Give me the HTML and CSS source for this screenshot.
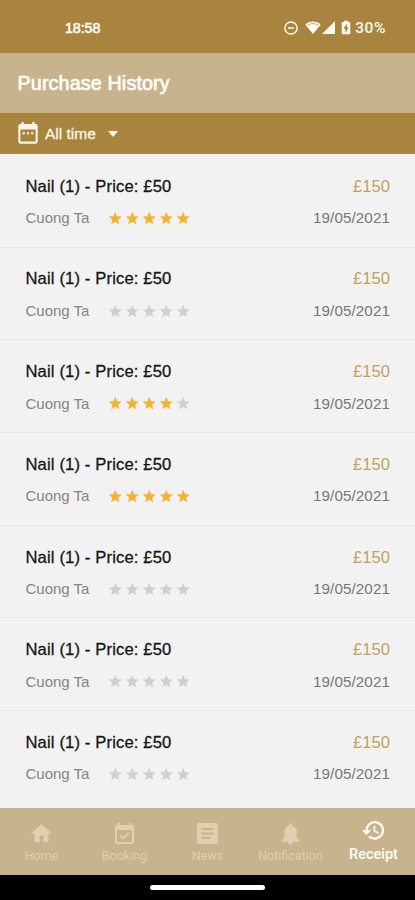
FILE: index.html
```
<!DOCTYPE html>
<html lang="en">
<head>
<meta charset="utf-8">
<title>Purchase History</title>
<link rel="stylesheet" href="styles.css">
</head>
<body>
<svg class="defs" aria-hidden="true">
  <symbol id="star" viewBox="0 0 24 24"><path d="M12 17.8 18.7 22l-1.8-7.7 5.9-5.1-7.8-.7L12 1.4 9 8.500l-7.800.7 5.900 5.100L5.300 22z"/></symbol>
</svg>
<div class="phone">
  <div class="status">
    <span class="clock">18:58</span>
    <span class="status-icons">
      <svg class="dnd" viewBox="0 0 14 14"><circle cx="7" cy="7" r="6.100"/><path d="M4 7h6"/></svg>
      <svg class="wifi" viewBox="0 0 16 13"><path d="M8 13 .3 3.700C4.500-.6 11.500-.6 15.700 3.700z"/><path class="wifi-gap" d="M2.800 4.300C6 2 10 2 13.200 4.300"/></svg>
      <svg class="signal" viewBox="0 0 13 13"><path d="M13 0v13H0z"/></svg>
      <svg class="battery" viewBox="0 0 10 15"><path d="M3 2V.8h4V2h1.300q1 0 1 1v10.300q0 1-1 1H1.700q-1 0-1-1V3q0-1 1-1z"/><path class="bolt" d="M5.800 3.500 2.400 8.800h2v4.200l3.300-5.500H5.800z"/></svg>
      <span class="percent">30%</span>
    </span>
  </div>
  <header class="header"><h1>Purchase History</h1></header>
  <div class="filter">
    <svg class="calendar" viewBox="0 0 20 22"><path fill-rule="evenodd" d="M3.500 0h2.200v2h8.600V0h2.200v2h1q2.200 0 2.200 2.200v15.300q0 2.200-2.200 2.200H2.500q-2.200 0-2.200-2.200V4.200Q.3 2 2.500 2h1zM2.400 7.400v12.200h15.200V7.400z"/><path d="M4.500 10.300h2.300v2H4.500zm4.300 0h2.300v2H8.800zm4.300 0h2.300v2h-2.300z"/></svg>
    <span class="filter-text">All time</span>
    <svg class="caret" viewBox="0 0 10 6"><path d="M0 0h10L5 6z"/></svg>
  </div>
  <main class="list" id="list"></main>
  <nav class="tabs">
    <div class="tab"><svg viewBox="0 0 24 24"><path d="M10 21v-7h4v7h5.200v-8.700H23L12 2 1 12.300h3.800V21z"/></svg><span>Home</span></div>
    <div class="tab"><svg viewBox="0 0 24 24"><path fill-rule="evenodd" d="M5 1h2.300v2h9.400V1H19v2h.5Q22 3 22 5.300v15.200q0 2.500-2.500 2.500h-15Q2 23 2 20.500V5.300Q2 3 4.500 3H5zM4.200 8.300v12.500h15.600V8.300z"/><path d="m10.700 18.600-3.700-3.700 1.300-1.300 2.400 2.400 5.200-5.200 1.300 1.300z"/></svg><span>Booking</span></div>
    <div class="tab"><svg viewBox="0 0 24 24"><path fill-rule="evenodd" d="M3.500 1h17Q23 1 23 3.500v17q0 2.500-2.500 2.500h-17Q1 23 1 20.500v-17Q1 1 3.500 1zM5.500 6.300v2h13v-2zm0 4.700v2h13v-2zm0 4.700v2h9v-2z"/></svg><span>News</span></div>
    <div class="tab"><svg viewBox="0 0 24 24"><path d="M12 23.500q2.200 0 2.200-2.800H9.800Q9.800 23.500 12 23.500zm6.500-7v-6q0-5.300-4.800-6.700V3a1.700 1.700 0 0 0-3.400 0v.8Q5.500 5.200 5.500 10.500v6L3 19v1.700h18V19z"/></svg><span>Notification</span></div>
    <div class="tab active"><svg viewBox="0 0 24 24"><path d="M13.300 2A9.800 9.800 0 0 0 3.500 11.800H0l4.700 4.900 4.900-4.900H5.900a7.400 7.400 0 1 1 2.200 5.300l-1.700 1.700A9.800 9.800 0 1 0 13.300 2zm-1.200 5.200v5.600l4.700 2.800.9-1.400-3.800-2.300V7.200z"/></svg><span>Receipt</span></div>
  </nav>
  <div class="gesture"><div class="pill"></div></div>
</div>
<script src="app.js"></script>
</body>
</html>
```
FILE: styles.css
```
* { box-sizing: border-box; }
body {
  margin: 0;
  font-family: "Liberation Sans", Arial, sans-serif;
  background: #f2f2f2;
}
.defs { position: absolute; width: 0; height: 0; }
svg { display: block; fill: currentColor; flex: none; }
.phone { display: flex; flex-direction: column; width: 415px; height: 900px; overflow: hidden; }

.status {
  display: flex;
  justify-content: space-between;
  align-items: center;
  height: 52.500px;
  padding: 3px 29px 0 65px;
  background: #a9843f;
  color: #fffaf0;
}
.clock { font-size: 14.300px; -webkit-text-stroke: .6px; letter-spacing: -.1px; }
.status-icons { display: flex; align-items: center; }
.dnd { width: 14px; height: 14px; fill: none; stroke: currentColor; stroke-width: 1.500; }
.wifi { width: 16px; height: 13px; margin-left: 7px; }
.wifi-gap { fill: none; stroke: #c5a66f; stroke-width: 1; }
.signal { width: 13px; height: 13px; margin-left: 1px; }
.battery { width: 10px; height: 15px; margin-left: 6px; }
.bolt { fill: #a9843f; }
.percent { margin-left: 4px; font: 500 15.500px/18px Roboto, sans-serif; letter-spacing: .6px; }

.header { display: flex; align-items: center; height: 60px; padding: 1px 18px 0 17.500px; background: #c7b38c; }
.header h1 { margin: 0; color: #fffdf8; font-size: 19.700px; font-weight: 400; letter-spacing: .15px; -webkit-text-stroke: .7px; }

.filter { display: flex; align-items: center; height: 41.500px; padding: 1px 18px 0; background: #a9843f; color: #fff5e8; }
.calendar { width: 20px; height: 22px; margin-right: 7px; margin-top: -1px; }
.filter-text { font-size: 15.500px; -webkit-text-stroke: .3px; }
.caret { width: 10px; height: 6px; margin-left: 12px; }

.list { display: grid; grid-template-rows: repeat(7, 92.700px); height: 653.500px; border-top: 1px solid #faf5f2; overflow: hidden; }
.item { display: flex; flex-direction: column; padding: 19.800px 25px 0 25.500px; border-bottom: 1px solid #e8e8e8; }
.item:last-child { border-bottom: 0; }
.line { display: flex; align-items: center; height: 24px; }
.line + .line { margin-top: 7px; }
.title { font-size: 16.600px; letter-spacing: .14px; color: #161616; -webkit-text-stroke: .3px; }
.price { margin-left: auto; font-size: 16.600px; color: #bfa25f; }
.staff { width: 82px; font-size: 15px; color: #858585; }
.date { margin-left: auto; font-size: 15.200px; letter-spacing: .1px; color: #777; }
.stars { display: flex; gap: 2.500px; padding-top: 1px; }
.stars svg { width: 14.500px; height: 14.500px; color: #cfcfcf; }
.stars .on { color: #f2b333; }

.tabs { display: grid; grid-template-columns: repeat(5, 1fr); height: 67.500px; background: #c7b38c; color: #e0d0b2; }
.tab { display: flex; flex-direction: column; align-items: center; padding-top: 14px; font: 400 12.500px/16px Roboto, sans-serif; }
.tab svg { width: 23px; height: 23px; }
.tab span { margin-top: 3px; }
.active { padding-top: 11.500px; color: #fffdf8; font-size: 14.500px; font-weight: 500; }
.active span { margin-top: 5px; }

.gesture { display: flex; justify-content: center; flex: 1; padding-top: 10px; background: #000; }
.pill { width: 115px; height: 5px; border-radius: 3px; background: #fff; }
```
FILE: app.js
```
const ratings = [5, 0, 4, 5, 0, 0, 0];
document.getElementById("list").innerHTML = ratings.map((rating) => `
  <article class="item">
    <div class="line"><span class="title">Nail (1) - Price: £50</span><span class="price">£150</span></div>
    <div class="line"><span class="staff">Cuong Ta</span>
      <span class="stars">${[1, 2, 3, 4, 5].map((n) => `<svg class="${n <= rating ? "on" : ""}"><use href="#star"/></svg>`).join("")}</span>
      <span class="date">19/05/2021</span></div>
  </article>`).join("");
```
